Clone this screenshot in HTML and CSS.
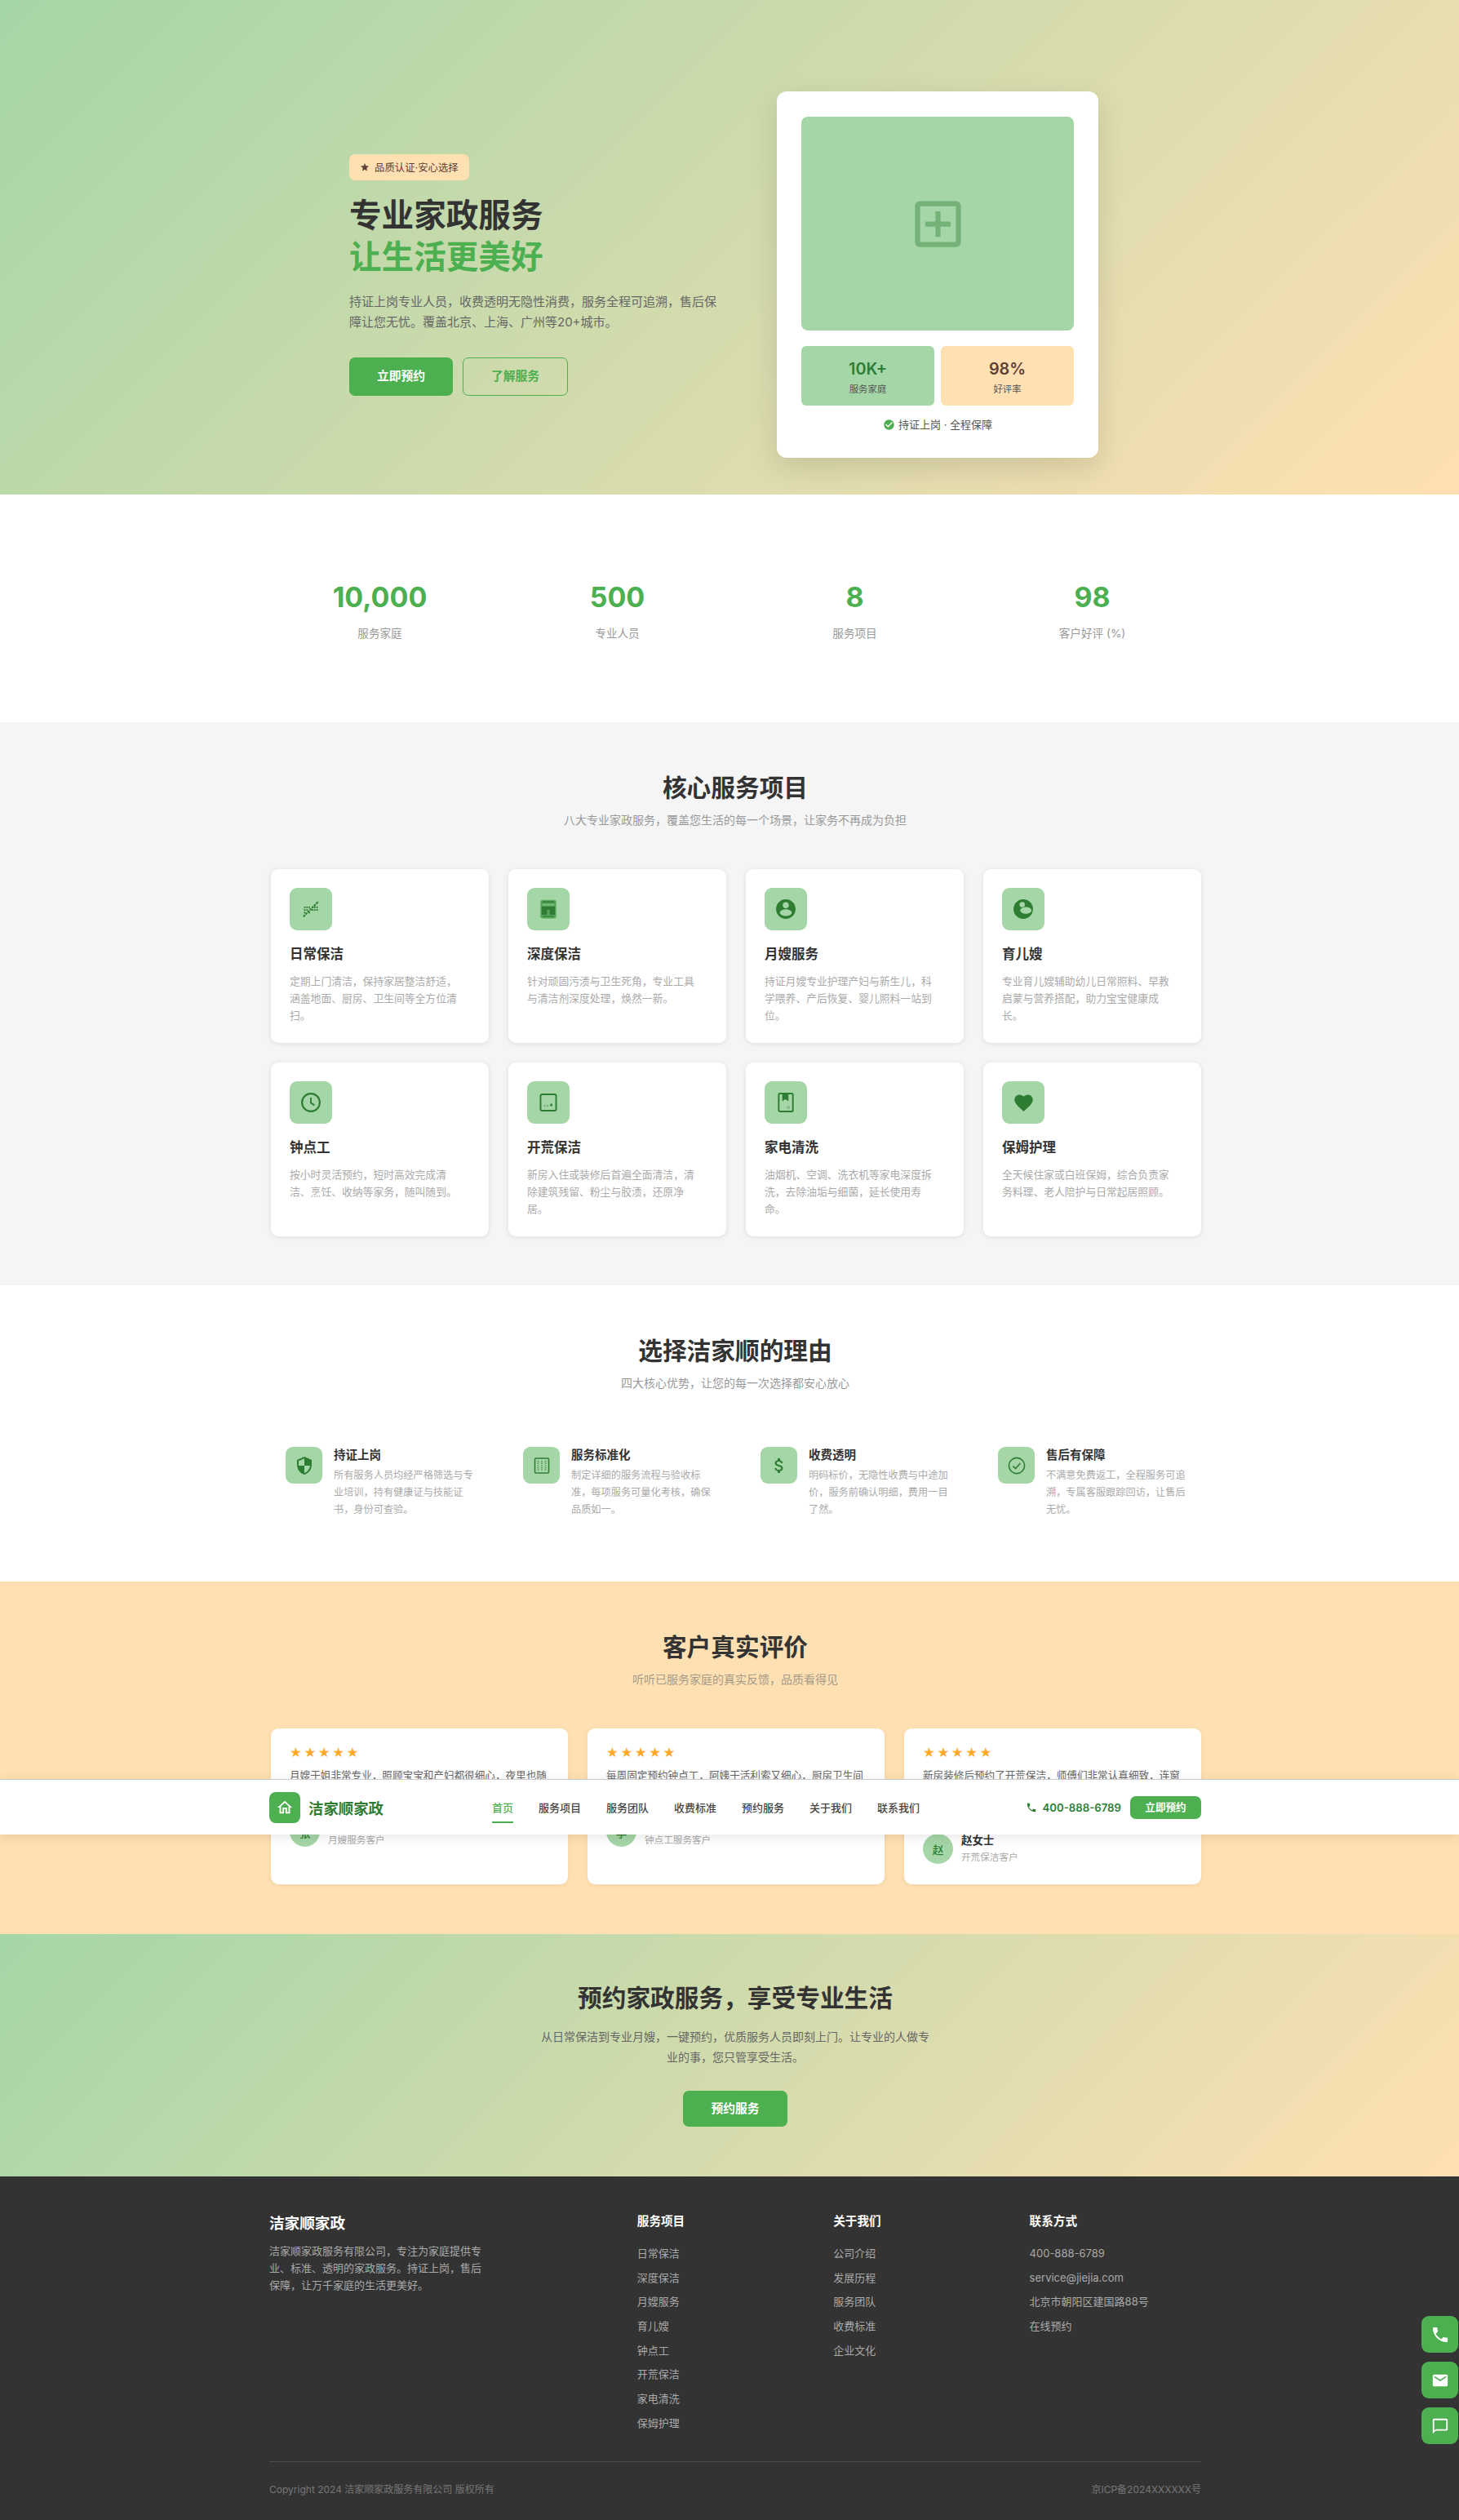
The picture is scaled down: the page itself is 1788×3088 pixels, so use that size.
FILE: index.html
```html
<!DOCTYPE html>
<html lang="zh-CN">
<head>
    <meta charset="UTF-8">
    <meta name="viewport" content="width=device-width, initial-scale=1.0">
    <title>洁家顺家政</title>
    <link rel="stylesheet" href="styles.css">
</head>
<body>
    <header class="site-header">
        <div class="container header-inner">
            <div class="logo">
                <span class="logo-mark">
                    <svg viewBox="0 0 24 24" width="22" height="22"><path fill="#fff" d="M12 5.69l5 4.5V18h-2v-6H9v6H7v-7.81l5-4.5M12 3L2 12h3v8h6v-6h2v6h6v-8h3L12 3z"/></svg>
                </span>
                <span class="logo-text">洁家顺家政</span>
            </div>
            <nav class="nav">
                <a class="nav-link active">首页</a>
                <a class="nav-link">服务项目</a>
                <a class="nav-link">服务团队</a>
                <a class="nav-link">收费标准</a>
                <a class="nav-link">预约服务</a>
                <a class="nav-link">关于我们</a>
                <a class="nav-link">联系我们</a>
            </nav>
            <div class="header-right">
                <span class="phone">
                    <svg viewBox="0 0 24 24" width="14" height="14"><path fill="#2e7d32" d="M6.62 10.79c1.44 2.83 3.76 5.14 6.59 6.59l2.2-2.2c.27-.27.67-.36 1.02-.24 1.12.37 2.33.57 3.57.57.55 0 1 .45 1 1V20c0 .55-.45 1-1 1-9.39 0-17-7.61-17-17 0-.55.45-1 1-1h3.5c.55 0 1 .45 1 1 0 1.25.2 2.45.57 3.57.11.35.03.74-.25 1.02l-2.2 2.2z"/></svg>
                    400-888-6789
                </span>
                <a class="header-btn">立即预约</a>
            </div>
        </div>
    </header>

    <section class="hero">
        <div class="hero-inner">
            <div class="hero-text">
                <span class="badge">
                    <svg viewBox="0 0 24 24" width="12" height="12"><path fill="#5d4037" d="M12 17.27L18.18 21l-1.64-7.03L22 9.24l-7.19-.61L12 2 9.19 8.63 2 9.24l5.46 4.73L5.82 21z"/></svg>
                    品质认证·安心选择
                </span>
                <h1>专业家政服务<br><span class="green">让生活更美好</span></h1>
                <p class="hero-desc">持证上岗专业人员，收费透明无隐性消费，服务全程可追溯，售后保障让您无忧。覆盖北京、上海、广州等20+城市。</p>
                <div class="hero-btns">
                    <a class="btn btn-primary">立即预约</a>
                    <a class="btn btn-outline">了解服务</a>
                </div>
            </div>
            <div class="hero-card">
                <div class="hero-img">
                    <svg viewBox="0 0 24 24" width="75" height="75"><path fill="#2e7d32" fill-opacity=".4" d="M19 3H5c-1.1 0-2 .9-2 2v14c0 1.1.9 2 2 2h14c1.1 0 2-.9 2-2V5c0-1.1-.9-2-2-2zm0 16H5V5h14v14zm-8-2h2v-4h4v-2h-4V7h-2v4H7v2h4z"/></svg>
                </div>
                <div class="hero-stats">
                    <div class="hero-stat stat-green"><strong>10K+</strong><span>服务家庭</span></div>
                    <div class="hero-stat stat-peach"><strong>98%</strong><span>好评率</span></div>
                </div>
                <div class="hero-caption">
                    <svg viewBox="0 0 24 24" width="15" height="15"><path fill="#4caf50" d="M12 2a10 10 0 100 20 10 10 0 000-20zm-2 15l-5-5 1.41-1.41L10 14.17l7.59-7.59L19 8l-9 9z"/></svg>
                    持证上岗 · 全程保障
                </div>
            </div>
        </div>
    </section>

    <section class="stats">
        <div class="container">
            <div class="four-cols">
                <div class="stat"><div class="stat-num">10,000</div><div class="stat-label">服务家庭</div></div>
                <div class="stat"><div class="stat-num">500</div><div class="stat-label">专业人员</div></div>
                <div class="stat"><div class="stat-num">8</div><div class="stat-label">服务项目</div></div>
                <div class="stat"><div class="stat-num">98</div><div class="stat-label">客户好评 (%)</div></div>
            </div>
        </div>
    </section>

    <section class="section section-grey">
        <div class="container">
            <h2 class="section-title">核心服务项目</h2>
            <p class="section-sub">八大专业家政服务，覆盖您生活的每一个场景，让家务不再成为负担</p>
            <div class="four-cols">
                <div class="service-card">
                    <div class="icon-box">
                        <svg viewBox="0 0 24 24" width="26" height="26" fill="#2e7d32">
                            <path d="M3.5 20.5L20.5 3.5" stroke="#2e7d32" stroke-width="1.9" stroke-dasharray="2.6 .8" fill="none"/>
                            <circle cx="5" cy="10" r="1"/><circle cx="7.6" cy="10" r="1"/><circle cx="10.2" cy="10" r="1"/><circle cx="16.4" cy="10" r="1"/><circle cx="19" cy="10" r="1"/>
                            <circle cx="5" cy="13" r="1"/><circle cx="7.6" cy="13" r="1"/><circle cx="13.8" cy="13" r="1"/><circle cx="16.4" cy="13" r="1"/><circle cx="19" cy="13" r="1"/>
                            <circle cx="5" cy="16" r="1"/><circle cx="10.2" cy="16" r="1"/>
                        </svg>
                    </div>
                    <h3>日常保洁</h3>
                    <p>定期上门清洁，保持家居整洁舒适，涵盖地面、厨房、卫生间等全方位清扫。</p>
                </div>
                <div class="service-card">
                    <div class="icon-box">
                        <svg viewBox="0 0 24 24" width="26" height="26">
                            <rect x="3" y="1.5" width="18" height="21" rx="2.5" fill="#5aa65e"/>
                            <rect x="5.5" y="3.2" width="13" height="1.4" fill="#2e7d32"/>
                            <rect x="5.5" y="6.6" width="13" height="1.2" fill="#a5d6a7" fill-opacity=".6"/>
                            <path fill="#2e7d32" d="M4.5 9h15v9.5h-6V13h-3v5.5h-6z"/>
                            <rect x="5.5" y="19.6" width="13" height="1.2" fill="#2e7d32"/>
                        </svg>
                    </div>
                    <h3>深度保洁</h3>
                    <p>针对顽固污渍与卫生死角，专业工具与清洁剂深度处理，焕然一新。</p>
                </div>
                <div class="service-card">
                    <div class="icon-box">
                        <svg viewBox="0 0 24 24" width="26" height="26">
                            <circle cx="12" cy="12" r="11" fill="#2e7d32"/>
                            <circle cx="12" cy="7.6" r="3.4" fill="#a5d6a7"/>
                            <ellipse cx="12" cy="16" rx="6.8" ry="3.8" fill="#a5d6a7"/>
                        </svg>
                    </div>
                    <h3>月嫂服务</h3>
                    <p>持证月嫂专业护理产妇与新生儿，科学喂养、产后恢复、婴儿照料一站到位。</p>
                </div>
                <div class="service-card">
                    <div class="icon-box">
                        <svg viewBox="0 0 24 24" width="26" height="26">
                            <circle cx="12" cy="12" r="11" fill="#2e7d32"/>
                            <circle cx="10.8" cy="7" r="3" fill="#a5d6a7"/>
                            <ellipse cx="15" cy="13.5" rx="6.4" ry="3.8" fill="#a5d6a7"/>
                        </svg>
                    </div>
                    <h3>育儿嫂</h3>
                    <p>专业育儿嫂辅助幼儿日常照料、早教启蒙与营养搭配，助力宝宝健康成长。</p>
                </div>
                <div class="service-card">
                    <div class="icon-box">
                        <svg viewBox="0 0 24 24" width="26" height="26" fill="none" stroke="#2e7d32">
                            <circle cx="12" cy="12" r="10" stroke-width="2"/>
                            <path d="M12 6.5v6l4 2.6" stroke-width="1.8"/>
                        </svg>
                    </div>
                    <h3>钟点工</h3>
                    <p>按小时灵活预约，短时高效完成清洁、烹饪、收纳等家务，随叫随到。</p>
                </div>
                <div class="service-card">
                    <div class="icon-box">
                        <svg viewBox="0 0 24 24" width="26" height="26">
                            <rect x="3.2" y="2.8" width="17.6" height="18.4" rx="1.5" fill="none" stroke="#2e7d32" stroke-width="1.8"/>
                            <path fill="#2e7d32" d="M13.5 16l1.8-3.6 1.8 3.6z"/>
                            <circle cx="8" cy="15.6" r=".7" fill="#2e7d32"/>
                            <circle cx="11" cy="15.6" r=".7" fill="#2e7d32"/>
                        </svg>
                    </div>
                    <h3>开荒保洁</h3>
                    <p>新房入住或装修后首遍全面清洁，清除建筑残留、粉尘与胶渍，还原净居。</p>
                </div>
                <div class="service-card">
                    <div class="icon-box">
                        <svg viewBox="0 0 24 24" width="26" height="26">
                            <rect x="4" y="1.8" width="16" height="20.4" rx="1.5" fill="none" stroke="#2e7d32" stroke-width="1.8"/>
                            <path fill="#2e7d32" d="M8 2h7v8.6l-3.5-2.2L8 10.6z"/>
                            <rect x="13.5" y="16" width="3" height="3" fill="#7cbc7f"/>
                        </svg>
                    </div>
                    <h3>家电清洗</h3>
                    <p>油烟机、空调、洗衣机等家电深度拆洗，去除油垢与细菌，延长使用寿命。</p>
                </div>
                <div class="service-card">
                    <div class="icon-box">
                        <svg viewBox="0 0 24 24" width="27" height="27"><path fill="#2e7d32" d="M12 21.35l-1.45-1.32C5.4 15.36 2 12.28 2 8.5 2 5.42 4.42 3 7.5 3c1.74 0 3.41.81 4.5 2.09C13.09 3.81 14.76 3 16.5 3 19.58 3 22 5.42 22 8.5c0 3.78-3.4 6.86-8.55 11.54L12 21.35z"/></svg>
                    </div>
                    <h3>保姆护理</h3>
                    <p>全天候住家或白班保姆，综合负责家务料理、老人陪护与日常起居照顾。</p>
                </div>
            </div>
        </div>
    </section>

    <section class="section">
        <div class="container">
            <h2 class="section-title">选择洁家顺的理由</h2>
            <p class="section-sub">四大核心优势，让您的每一次选择都安心放心</p>
            <div class="four-cols">
                <div class="why-item">
                    <div class="icon-box icon-small">
                        <svg viewBox="0 0 24 24" width="24" height="24"><path fill="#2e7d32" d="M12 1L3 5v6c0 5.55 3.84 10.74 9 12 5.16-1.26 9-6.45 9-12V5l-9-4zm0 10.99h7c-.53 4.12-3.28 7.79-7 8.94V12H5V6.3l7-3.11v8.8z"/></svg>
                    </div>
                    <div class="why-body">
                        <h4>持证上岗</h4>
                        <p>所有服务人员均经严格筛选与专业培训，持有健康证与技能证书，身份可查验。</p>
                    </div>
                </div>
                <div class="why-item">
                    <div class="icon-box icon-small">
                        <svg viewBox="0 0 24 24" width="24" height="24" fill="none" stroke="#2e7d32">
                            <rect x="3.5" y="3" width="17" height="18" rx="1.5" stroke-width="1.6"/>
                            <path d="M7.5 6v12M12 6v12M16.5 6v12" stroke-width="1.8" stroke-dasharray="1.4 1.2" stroke-opacity=".7"/>
                        </svg>
                    </div>
                    <div class="why-body">
                        <h4>服务标准化</h4>
                        <p>制定详细的服务流程与验收标准，每项服务可量化考核，确保品质如一。</p>
                    </div>
                </div>
                <div class="why-item">
                    <div class="icon-box icon-small">
                        <svg viewBox="0 0 24 24" width="24" height="24"><path fill="#2e7d32" d="M11.8 10.9c-2.27-.59-3-1.2-3-2.15 0-1.09 1.01-1.85 2.7-1.85 1.78 0 2.44.85 2.5 2.1h2.21c-.07-1.72-1.12-3.3-3.21-3.81V3h-3v2.16c-1.94.42-3.5 1.68-3.5 3.61 0 2.31 1.91 3.46 4.7 4.13 2.5.6 3 1.48 3 2.41 0 .69-.49 1.79-2.7 1.79-2.06 0-2.87-.92-2.98-2.1h-2.2c.12 2.19 1.76 3.42 3.68 3.83V21h3v-2.15c1.95-.37 3.5-1.5 3.5-3.55 0-2.84-2.43-3.81-4.7-4.4z"/></svg>
                    </div>
                    <div class="why-body">
                        <h4>收费透明</h4>
                        <p>明码标价，无隐性收费与中途加价，服务前确认明细，费用一目了然。</p>
                    </div>
                </div>
                <div class="why-item">
                    <div class="icon-box icon-small">
                        <svg viewBox="0 0 24 24" width="24" height="24" fill="none" stroke="#2e7d32" stroke-width="1.6">
                            <circle cx="12" cy="12" r="9.6"/>
                            <path d="M7.5 12.5l3 3 6-6.5"/>
                        </svg>
                    </div>
                    <div class="why-body">
                        <h4>售后有保障</h4>
                        <p>不满意免费返工，全程服务可追溯，专属客服跟踪回访，让售后无忧。</p>
                    </div>
                </div>
            </div>
        </div>
    </section>

    <section class="section section-peach">
        <div class="container">
            <h2 class="section-title">客户真实评价</h2>
            <p class="section-sub sub-peach">听听已服务家庭的真实反馈，品质看得见</p>
            <div class="three-cols">
                <div class="review-card">
                    <div class="stars">★★★★★</div>
                    <p class="review-text">月嫂于姐非常专业，照顾宝宝和产妇都很细心，夜里也随叫随到，全家都很放心。</p>
                    <div class="review-author">
                        <span class="avatar">张</span>
                        <div><div class="author-name">张女士</div><div class="author-sub">月嫂服务客户</div></div>
                    </div>
                </div>
                <div class="review-card">
                    <div class="stars">★★★★★</div>
                    <p class="review-text">每周固定预约钟点工，阿姨干活利索又细心，厨房卫生间都打扫得干干净净。</p>
                    <div class="review-author">
                        <span class="avatar">李</span>
                        <div><div class="author-name">李先生</div><div class="author-sub">钟点工服务客户</div></div>
                    </div>
                </div>
                <div class="review-card">
                    <div class="stars">★★★★★</div>
                    <p class="review-text">新房装修后预约了开荒保洁，师傅们非常认真细致，连窗框和柜子缝隙都清理到位，收费也和报价一致，入住前省心不少。</p>
                    <div class="review-author">
                        <span class="avatar">赵</span>
                        <div><div class="author-name">赵女士</div><div class="author-sub">开荒保洁客户</div></div>
                    </div>
                </div>
            </div>
        </div>
    </section>

    <section class="cta">
        <h2 class="cta-title">预约家政服务，享受专业生活</h2>
        <p class="cta-desc">从日常保洁到专业月嫂，一键预约，优质服务人员即刻上门。让专业的人做专业的事，您只管享受生活。</p>
        <a class="btn btn-primary btn-cta">预约服务</a>
    </section>

    <footer class="footer">
        <div class="container">
            <div class="footer-grid">
                <div>
                    <div class="footer-brand">洁家顺家政</div>
                    <p class="footer-about">洁家顺家政服务有限公司，专注为家庭提供专业、标准、透明的家政服务。持证上岗，售后保障，让万千家庭的生活更美好。</p>
                </div>
                <div>
                    <h5>服务项目</h5>
                    <ul>
                        <li>日常保洁</li><li>深度保洁</li><li>月嫂服务</li><li>育儿嫂</li>
                        <li>钟点工</li><li>开荒保洁</li><li>家电清洗</li><li>保姆护理</li>
                    </ul>
                </div>
                <div>
                    <h5>关于我们</h5>
                    <ul>
                        <li>公司介绍</li><li>发展历程</li><li>服务团队</li><li>收费标准</li><li>企业文化</li>
                    </ul>
                </div>
                <div>
                    <h5>联系方式</h5>
                    <ul>
                        <li>400-888-6789</li><li>service@jiejia.com</li><li>北京市朝阳区建国路88号</li><li>在线预约</li>
                    </ul>
                </div>
            </div>
            <div class="footer-bottom">
                <span>Copyright 2024 洁家顺家政服务有限公司 版权所有</span>
                <span>京ICP备2024XXXXXX号</span>
            </div>
        </div>
    </footer>

    <div class="float-btns">
        <a class="float-btn"><svg viewBox="0 0 24 24" width="24" height="24"><path fill="#fff" d="M6.62 10.79c1.44 2.83 3.76 5.14 6.59 6.59l2.2-2.2c.27-.27.67-.36 1.02-.24 1.12.37 2.33.57 3.57.57.55 0 1 .45 1 1V20c0 .55-.45 1-1 1-9.39 0-17-7.61-17-17 0-.55.45-1 1-1h3.5c.55 0 1 .45 1 1 0 1.25.2 2.45.57 3.57.11.35.03.74-.25 1.02l-2.2 2.2z"/></svg></a>
        <a class="float-btn"><svg viewBox="0 0 24 24" width="22" height="22"><path fill="#fff" d="M20 4H4c-1.1 0-1.99.9-1.99 2L2 18c0 1.1.9 2 2 2h16c1.1 0 2-.9 2-2V6c0-1.1-.9-2-2-2zm0 4l-8 5-8-5V6l8 5 8-5v2z"/></svg></a>
        <a class="float-btn"><svg viewBox="0 0 24 24" width="22" height="22"><path fill="#fff" d="M20 2H4c-1.1 0-2 .9-2 2v18l4-4h14c1.1 0 2-.9 2-2V4c0-1.1-.9-2-2-2zm0 14H6l-2 2V4h16v12z"/></svg></a>
    </div>
</body>
</html>
```

FILE: styles.css
```css
* {
    box-sizing: border-box;
}

html, body {
    overflow-x: hidden;
}

body {
    margin: 0;
    position: relative;
    font-family: Inter, "Noto Sans CJK SC", sans-serif;
    color: #333;
    background-color: #fff;
}

h1, h2, h3, h4, h5, p, ul {
    margin: 0;
    padding: 0;
}

.container {
    width: 1142px;
    margin-left: 330px;
}

.four-cols {
    display: grid;
    grid-template-columns: repeat(4, 267px);
    gap: 24px;
    margin-left: 2px;
}

.three-cols {
    display: grid;
    grid-template-columns: repeat(3, 364px);
    gap: 24px;
    margin-left: 2px;
}

/* header sits on top of the reviews, where it stuck when the page was captured */
.site-header {
    position: absolute;
    top: 2180px;
    left: 0;
    right: 0;
    z-index: 10;
    height: 68px;
    background-color: #fff;
    border-top: 1px solid #ccc;
    box-shadow: 0 3px 14px rgba(0, 0, 0, 0.1);
}

.header-inner {
    display: flex;
    align-items: center;
    height: 67px;
}

.logo {
    display: flex;
    align-items: center;
    gap: 10px;
}

.logo-mark {
    display: flex;
    align-items: center;
    justify-content: center;
    width: 38px;
    height: 38px;
    border-radius: 8px;
    background-color: #4caf50;
}

.logo-text {
    font-size: 18.4px;
    font-weight: 700;
    color: #2e7d32;
}

.nav {
    display: flex;
    gap: 31px;
    margin-left: 133px;
}

.nav-link {
    position: relative;
    font-size: 13px;
    font-weight: 500;
    line-height: 20px;
    color: #444;
}

.nav-link.active {
    color: #4caf50;
}

.nav-link.active::after {
    content: "";
    position: absolute;
    left: 0;
    right: 0;
    bottom: -9px;
    height: 2px;
    background-color: #4caf50;
}

.header-right {
    display: flex;
    align-items: center;
    gap: 11px;
    margin-left: auto;
}

.phone {
    display: flex;
    align-items: center;
    gap: 6px;
    font-size: 13.2px;
    font-weight: 600;
    color: #2e7d32;
}

.header-btn {
    width: 87px;
    height: 28px;
    line-height: 28px;
    text-align: center;
    border-radius: 7px;
    background-color: #4caf50;
    color: #fff;
    font-size: 12.6px;
    font-weight: 600;
}

/* hero */
.hero {
    height: 606px;
    padding: 112px 0 45px 428px;
    background: linear-gradient(135deg, #a5d6a7, #ffe0b2);
}

.hero-inner {
    display: flex;
    align-items: center;
    gap: 70px;
}

.hero-text {
    width: 454px;
}

.badge {
    display: inline-flex;
    align-items: center;
    gap: 6px;
    height: 32px;
    padding: 0 13px;
    border-radius: 7px;
    background-color: #ffe0b2;
    color: #5d4037;
    font-size: 12.4px;
}

.hero-text h1 {
    margin-top: 18px;
    font-size: 39.6px;
    line-height: 51px;
    font-weight: 700;
}

.green {
    color: #4caf50;
}

.hero-desc {
    margin-top: 16px;
    font-size: 15px;
    line-height: 25.5px;
    color: #666;
}

.hero-btns {
    display: flex;
    gap: 12px;
    margin-top: 30px;
}

.btn {
    display: inline-block;
    height: 47px;
    line-height: 47px;
    width: 127px;
    text-align: center;
    border-radius: 7px;
    font-size: 14.8px;
    font-weight: 600;
}

.btn-primary {
    background-color: #4caf50;
    color: #fff;
}

.btn-outline {
    width: 129px;
    line-height: 44px;
    border: 1.5px solid #4caf50;
    color: #4caf50;
}

.hero-card {
    width: 394px;
    height: 449px;
    padding: 31px 30px 0;
    border-radius: 12px;
    background-color: #fff;
    box-shadow: 0 12px 36px rgba(0, 0, 0, 0.12);
}

.hero-img {
    display: flex;
    align-items: center;
    justify-content: center;
    height: 262px;
    border-radius: 8px;
    background-color: #a5d6a7;
}

.hero-stats {
    display: grid;
    grid-template-columns: 1fr 1fr;
    gap: 8px;
    margin-top: 19px;
}

.hero-stat {
    height: 73px;
    padding-top: 16px;
    border-radius: 6px;
    text-align: center;
}

.hero-stat strong {
    display: block;
    font-size: 19.8px;
    line-height: 24px;
    font-weight: 600;
}

.hero-stat span {
    display: block;
    margin-top: 5px;
    font-size: 11.4px;
    line-height: 16px;
    color: #555;
}

.stat-green {
    background-color: #a5d6a7;
    color: #2e7d32;
}

.stat-peach {
    background-color: #ffe0b2;
    color: #5d4037;
}

.hero-caption {
    display: flex;
    align-items: center;
    justify-content: center;
    gap: 4px;
    margin-top: 13px;
    font-size: 13px;
    line-height: 20px;
    color: #555;
}

/* numbers */
.stats {
    height: 279px;
    padding-top: 104px;
}

.stat {
    text-align: center;
}

.stat-num {
    font-size: 34px;
    line-height: 44px;
    font-weight: 700;
    color: #4caf50;
}

.stat-label {
    margin-top: 12px;
    font-size: 13.6px;
    line-height: 20px;
    color: #999;
}

/* sections */
.section {
    padding: 60px 0;
}

.section-grey {
    background-color: #f5f5f5;
}

.section-peach {
    padding-bottom: 61px;
    background-color: #ffe0b2;
}

.section-title {
    font-size: 29.7px;
    line-height: 40px;
    font-weight: 700;
    text-align: center;
}

.section-sub {
    margin: 10px 0 50px;
    font-size: 14px;
    line-height: 20px;
    text-align: center;
    color: #999;
}

.sub-peach {
    color: #a39a88;
}

.service-card {
    padding: 23px 30px 23px 23px;
    border-radius: 9px;
    background-color: #fff;
    box-shadow: 0 1px 6px rgba(0, 0, 0, 0.1);
}

.icon-box {
    display: flex;
    align-items: center;
    justify-content: center;
    flex-shrink: 0;
    width: 52px;
    height: 52px;
    border-radius: 9px;
    background-color: #a5d6a7;
}

.icon-small {
    width: 45px;
    height: 45px;
}

.service-card h3 {
    margin-top: 18px;
    font-size: 16.5px;
    line-height: 22px;
    font-weight: 600;
}

.service-card p {
    margin-top: 12px;
    font-size: 12.8px;
    line-height: 21px;
    min-height: 63px;
    color: #aaa;
}

.why-item {
    display: flex;
    gap: 14px;
    padding: 18px;
}

.why-item h4 {
    font-size: 14.5px;
    line-height: 20px;
    font-weight: 600;
}

.why-item p {
    margin-top: 4px;
    font-size: 12.2px;
    line-height: 21px;
    color: #aaa;
}

/* reviews */
.review-card {
    display: flex;
    flex-direction: column;
    padding: 23px 23px 24px;
    border-radius: 9px;
    background-color: #fff;
    box-shadow: 0 1px 6px rgba(0, 0, 0, 0.06);
}

.stars {
    font-family: "DejaVu Sans", sans-serif;
    font-size: 16.5px;
    line-height: 14px;
    letter-spacing: 2.6px;
    color: #ffa726;
}

.review-text {
    margin-top: 10px;
    font-size: 12.6px;
    line-height: 21px;
    color: #666;
}

.review-author {
    display: flex;
    align-items: center;
    gap: 10px;
    margin-top: 18px;
}

.avatar {
    display: flex;
    align-items: center;
    justify-content: center;
    width: 37px;
    height: 37px;
    border-radius: 50%;
    background-color: #a5d6a7;
    color: #2e7d32;
    font-size: 13.6px;
    font-weight: 500;
}

.author-name {
    font-size: 13.4px;
    line-height: 18px;
    font-weight: 600;
}

.author-sub {
    margin-top: 3px;
    font-size: 11.6px;
    line-height: 18px;
    color: #aaa;
}

/* call to action */
.cta {
    height: 297px;
    padding-top: 58px;
    text-align: center;
    background: linear-gradient(135deg, #a5d6a7, #ffe0b2);
}

.cta-title {
    margin-left: 14px;
    font-size: 29.7px;
    line-height: 40px;
    font-weight: 700;
}

.cta-desc {
    width: 480px;
    margin: 15px 0 29px 661px;
    font-size: 14px;
    line-height: 25px;
    color: #666;
}

.btn-cta {
    display: block;
    width: 128px;
    height: 44px;
    line-height: 44px;
    margin-left: 837px;
}

/* footer */
.footer {
    height: 421px;
    padding-top: 44px;
    background-color: #333;
    color: #aaa;
}

.footer-grid {
    display: grid;
    grid-template-columns: 2fr 1fr 1fr 1fr;
    gap: 30px;
    height: 305px;
}

.footer-brand {
    font-size: 18.6px;
    line-height: 26px;
    font-weight: 700;
    color: #fff;
}

.footer-about {
    width: 266px;
    margin-top: 11px;
    font-size: 13px;
    line-height: 21px;
}

.footer h5 {
    font-size: 14.6px;
    line-height: 22px;
    font-weight: 700;
    color: #fff;
}

.footer ul {
    list-style: none;
    margin-top: 18px;
}

.footer li {
    font-size: 13px;
    line-height: 20px;
    margin-bottom: 9.7px;
}

.footer-bottom {
    display: flex;
    justify-content: space-between;
    padding-top: 24px;
    border-top: 1px solid #4d4d4d;
    font-size: 12px;
    line-height: 20px;
    color: #777;
}

/* side buttons */
.float-btns {
    position: absolute;
    top: 2838px;
    right: 1px;
    z-index: 20;
    display: flex;
    flex-direction: column;
    gap: 11px;
}

.float-btn {
    display: flex;
    align-items: center;
    justify-content: center;
    width: 45px;
    height: 45px;
    border-radius: 9px;
    background-color: #4caf50;
}
```
